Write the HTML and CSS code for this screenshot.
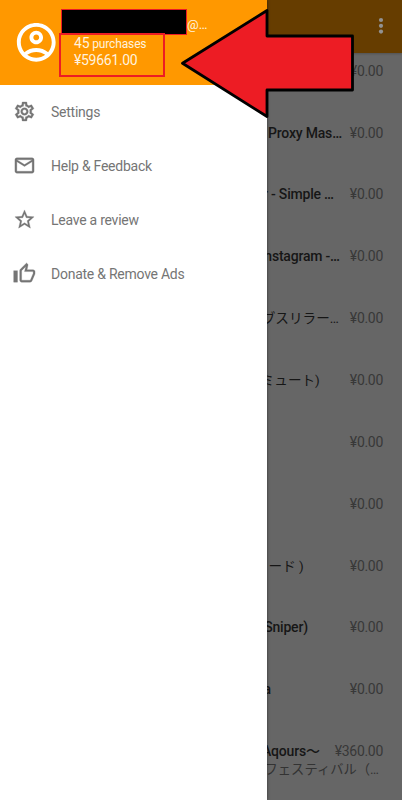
FILE: index.html
```html
<!DOCTYPE html>
<html lang="en">
<head>
<meta charset="utf-8">
<title>Purchases</title>
<link rel="stylesheet" href="styles.css">
</head>
<body>
<div class="app">
  <main class="page">
    <header class="toolbar">
      <svg class="more" viewBox="0 0 6 18"><circle cx="3" cy="3" r="2.1"/><circle cx="3" cy="8.8" r="2.1"/><circle cx="3" cy="14.6" r="2.1"/></svg>
    </header>
    <ul class="list">
      <li class="row"><span class="title"></span><span class="price">¥0.00</span></li>
      <li class="row"><span class="title">Proxy Mas…</span><span class="price">¥0.00</span></li>
      <li class="row"><span class="title end-8">r - Simple …</span><span class="price">¥0.00</span></li>
      <li class="row"><span class="title end-2">nstagram -…</span><span class="price">¥0.00</span></li>
      <li class="row"><span class="title jp end-3">ブスリラー…</span><span class="price">¥0.00</span></li>
      <li class="row"><span class="title jp end-22">ミュート)</span><span class="price">¥0.00</span></li>
      <li class="row"><span class="title"></span><span class="price">¥0.00</span></li>
      <li class="row"><span class="title"></span><span class="price">¥0.00</span></li>
      <li class="row"><span class="title jp end-38">ード )</span><span class="price">¥0.00</span></li>
      <li class="row"><span class="title end-34">Sniper)</span><span class="price">¥0.00</span></li>
      <li class="row"><span class="title end-71">a</span><span class="price">¥0.00</span></li>
      <li class="row"><span class="title end-7">Aqours〜</span><span class="price">¥360.00</span><span class="subtitle">フェスティバル（…</span></li>
    </ul>
  </main>
  <aside class="drawer">
    <header class="account">
      <svg class="avatar" viewBox="0 0 24 24"><path fill-rule="evenodd" d="M12 2C6.48 2 2 6.48 2 12s4.48 10 10 10 10-4.48 10-10S17.52 2 12 2zM7.35 18.5C8.66 17.56 10.26 17 12 17s3.34.56 4.65 1.5C15.34 19.44 13.74 20 12 20s-3.34-.56-4.65-1.5zm10.79-1.38C16.45 15.8 14.32 15 12 15s-4.45.8-6.14 2.12C4.7 15.73 4 13.95 4 12c0-4.42 3.58-8 8-8s8 3.58 8 8c0 1.95-.7 3.73-1.86 5.12zM12 6c-1.93 0-3.5 1.57-3.5 3.5S10.07 13 12 13s3.5-1.57 3.5-3.5S13.93 6 12 6zm0 5c-.83 0-1.5-.67-1.5-1.5S11.17 8 12 8s1.5.67 1.5 1.5S12.83 11 12 11z"/></svg>
      <div class="details">
        <div class="email"><span class="redacted"></span><span>@…</span></div>
        <div class="totals"><div class="count"><b>45</b> purchases</div><div class="sum">¥59661.00</div></div>
      </div>
    </header>
    <nav class="menu">
      <a class="item"><svg class="icon" viewBox="0 0 24 24"><path d="M19.43 12.98c.04-.32.07-.64.07-.98s-.03-.66-.07-.98l2.11-1.65c.19-.15.24-.42.12-.64l-2-3.46c-.12-.22-.39-.3-.61-.22l-2.49 1c-.52-.4-1.08-.73-1.69-.98l-.38-2.65C14.46 2.18 14.25 2 14 2h-4c-.25 0-.46.18-.49.42l-.38 2.65c-.61.25-1.17.59-1.69.98l-2.49-1c-.23-.09-.49 0-.61.22l-2 3.46c-.13.22-.07.49.12.64l2.11 1.65c-.04.32-.07.65-.07.98s.03.66.07.98l-2.11 1.65c-.19.15-.24.42-.12.64l2 3.46c.12.22.39.3.61.22l2.49-1c.52.4 1.08.73 1.69.98l.38 2.65c.03.24.24.42.49.42h4c.25 0 .46-.18.49-.42l.38-2.65c.61-.25 1.17-.59 1.69-.98l2.49 1c.23.09.49 0 .61-.22l2-3.46c.12-.22.07-.49-.12-.64l-2.11-1.65zm-1.98-1.71c.04.31.05.52.05.73s-.02.43-.05.73l-.14 1.13.89.7 1.08.84-.7 1.21-1.27-.51-1.04-.42-.9.68c-.43.32-.84.56-1.25.73l-1.06.43-.16 1.13-.2 1.35h-1.4l-.19-1.35-.16-1.13-1.06-.43c-.43-.18-.83-.41-1.23-.71l-.91-.7-1.06.43-1.27.51-.7-1.21 1.08-.84.89-.7-.14-1.13c-.03-.31-.05-.54-.05-.74s.02-.43.05-.73l.14-1.13-.89-.7-1.08-.84.7-1.21 1.27.51 1.04.42.9-.68c.43-.32.84-.56 1.25-.73l1.06-.43.16-1.13.2-1.35h1.39l.19 1.35.16 1.13 1.06.43c.43.18.83.41 1.23.71l.91.7 1.06-.43 1.27-.51.7 1.21-1.07.85-.89.7.14 1.13zM12 8c-2.21 0-4 1.79-4 4s1.79 4 4 4 4-1.79 4-4-1.79-4-4-4zm0 6c-1.1 0-2-.9-2-2s.9-2 2-2 2 .9 2 2-.9 2-2 2z"/></svg><span>Settings</span></a>
      <a class="item"><svg class="icon" viewBox="0 0 24 24"><path d="M22 6c0-1.100-.9-2-2-2H4c-1.100 0-2 .9-2 2v12c0 1.100.9 2 2 2h16c1.100 0 2-.9 2-2V6zm-2 0-8 5-8-5h16zm0 12H4V8l8 5 8-5v10z"/></svg><span>Help &amp; Feedback</span></a>
      <a class="item"><svg class="icon" viewBox="0 0 24 24"><path d="M22 9.240l-7.190-.62L12 2 9.190 8.630 2 9.240l5.460 4.730L5.820 21 12 17.270 18.180 21l-1.630-7.030L22 9.240zM12 15.400l-3.760 2.270 1-4.280-3.320-2.880 4.380-.38L12 6.100l1.710 4.040 4.380.38-3.320 2.880 1 4.280L12 15.400z"/></svg><span>Leave a review</span></a>
      <a class="item"><svg class="icon" viewBox="0 0 24 24"><path d="M9 21h9c.83 0 1.540-.5 1.840-1.220l3.020-7.050c.09-.23.14-.47.14-.73v-2c0-1.100-.9-2-2-2h-6.310l.95-4.570.03-.32c0-.41-.17-.79-.44-1.060L14.170 1 7.580 7.590C7.220 7.950 7 8.450 7 9v10c0 1.100.9 2 2 2zM9 9l4.340-4.340L12 10h9v2l-3 7H9V9zM.7 9h4v12H.7z"/></svg><span>Donate &amp; Remove Ads</span></a>
    </nav>
  </aside>
  <svg class="arrow" viewBox="0 0 176 112"><path d="M2.500 55.300 87 2.500V28H172.500V82H87v26.500z"/></svg>
</div>
</body>
</html>
```

FILE: styles.css
```css
* { box-sizing: border-box; }
body { margin: 0; font-family: Roboto, "Noto Sans CJK JP", sans-serif; }
.app { position: relative; width: 402px; height: 800px; overflow: hidden; }

.page { height: 100%; background: #666; }
.toolbar {
  display: flex;
  justify-content: flex-end;
  height: 53px;
  padding: 17px 18px 0 0;
  background: #663d00;
  box-shadow: 0 1px 2px rgba(0, 0, 0, .2);
}
.more { width: 6px; height: 18px; fill: #929292; }

.list {
  display: grid;
  grid-template-columns: minmax(0, 1fr);
  grid-auto-rows: 61.850px;
  margin: 0;
  padding: 7.800px 19px 0 262px;
  list-style: none;
}
.row {
  display: flex;
  flex-wrap: wrap;
  justify-content: space-between;
  align-content: flex-start;
  font-size: 14px;
  line-height: 20px;
  white-space: nowrap;
}
.title {
  display: flex;
  flex: 1;
  min-width: 0;
  justify-content: flex-end;
  margin-right: 8px;
  font-weight: 500;
  letter-spacing: -.2px;
  color: #161616;
}
.title.jp { font-size: 13.600px; font-weight: 400; letter-spacing: 0; }
.title.end-2 { padding-right: 2px; }
.title.end-3 { padding-right: 3px; }
.title.end-7 { padding-right: 7px; }
.title.end-8 { padding-right: 8px; }
.title.end-22 { padding-right: 22px; }
.title.end-34 { padding-right: 34px; }
.title.end-38 { padding-right: 38px; }
.title.end-71 { padding-right: 71px; }
.price { letter-spacing: -.3px; color: #383838; }
.subtitle {
  display: flex;
  flex: 0 0 100%;
  justify-content: flex-end;
  height: 18px;
  padding-right: 4px;
  font-size: 13.300px;
  line-height: 17px;
  color: #333;
}

.drawer {
  position: absolute;
  inset: 0 auto 0 0;
  width: 267px;
  background: #fff;
  box-shadow: 0 0 3px rgba(0, 0, 0, .5);
}
.account {
  display: flex;
  height: 84.500px;
  padding: 9px 0 0 12.500px;
  background: #ff9800;
  color: #fff2df;
}
.avatar { flex: none; width: 46.500px; height: 46.500px; margin-top: 9.500px; fill: #fff; }
.email { display: flex; height: 24px; margin-left: 2px; font-size: 13px; line-height: 31px; }
.redacted { width: 126px; height: 26px; border: 1px solid #ed1c24; background: #000; }
.totals {
  position: relative;
  width: 106px;
  height: 44px;
  padding-left: 13px;
  border: 2px solid #ed1c24;
}
.count { height: 16px; font-size: 12px; line-height: 17px; letter-spacing: -.15px; }
.count b { font-size: 14px; font-weight: 400; }
.sum { font-size: 14px; line-height: 19px; letter-spacing: -.3px; }

.item { display: flex; align-items: center; height: 54px; padding-left: 13px; color: #757575; font-size: 14px; letter-spacing: -.25px; }
.icon { width: 23px; height: 23px; margin-right: 15px; fill: #757575; stroke: #757575; stroke-width: .3; }
.arrow {
  position: absolute;
  left: 180px;
  top: 8px;
  width: 176px;
  height: 112px;
  fill: #ed1c24;
  stroke: #000;
  stroke-width: 2.800;
  stroke-linejoin: round;
}
```
